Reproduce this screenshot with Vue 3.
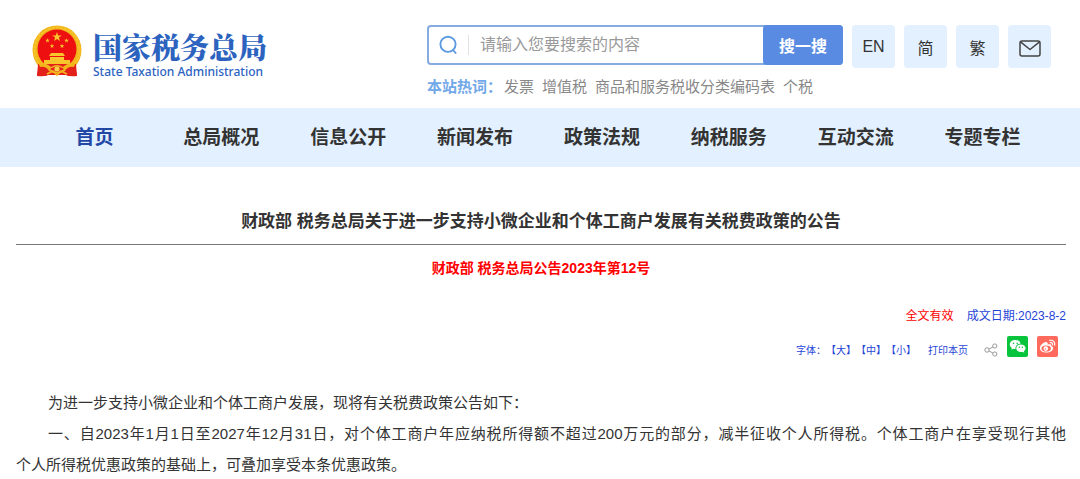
<template>
  <div class="page">
    <header class="header">
      <a class="logo" href="#">
        <svg class="emblem" viewBox="0 0 50 52" aria-hidden="true">
          <path d="M8 37 L5 50 Q11 52 16 50 L25 47 L34 50 Q39 52 45 50 L42 37 Z" fill="#d9141a" />
          <circle cx="25" cy="25" r="24.5" fill="#f2b61c" />
          <circle cx="25" cy="25" r="22.5" fill="none" stroke="#f6c42a" stroke-width="2" stroke-dasharray="3 1" />
          <circle cx="25" cy="24" r="19.5" fill="#ee1010" />
          <path :d="star(25, 12, 5)" fill="#f9c52c" />
          <path v-for="s in smallStars" :key="s[0]" :d="star(s[0], s[1], 2.4)" fill="#f9c52c" />
          <path d="M19 28 H31 L33 31 H17 Z M18 32 H32 V35 H38 V39 H12 V35 H18 Z" fill="#f9c52c" />
          <path d="M6 39 H44 L45 51 Q38 52 34 50 H16 Q12 52 5 51 Z" fill="#e3201a" />
          <path d="M6 37 Q15 38 19 42 Q25 38 31 42 Q35 38 44 37 L42 42 Q36 41 33 46 Q25 51 17 46 Q14 41 8 42 Z" fill="#f2b61c" />
          <path d="M18 44 Q25 39 32 44 Q25 50 18 44 Z" fill="#e3201a" />
          <circle cx="25" cy="44" r="2.6" fill="#f9d24a" />
          <path d="M15 49 L21 46 L25 50 L29 46 L35 49" fill="none" stroke="#f2b61c" stroke-width="1.6" />
        </svg>
        <span class="logo-text">
          <span class="logo-cn">国家税务总局</span>
          <span class="logo-en">State Taxation Administration</span>
        </span>
      </a>

      <div class="search">
        <form class="search-box" @submit.prevent>
          <label class="search-label" for="keyword" aria-label="搜索">
            <svg width="20" height="20" viewBox="0 0 20 20" fill="none" stroke="#5c9ae2" stroke-width="1.9" stroke-linecap="round">
              <circle cx="9" cy="9.3" r="7.6" />
              <path d="M14 15 L16.6 18" />
            </svg>
          </label>
          <input id="keyword" v-model="keyword" type="text" placeholder="请输入您要搜索的内容">
          <button type="submit">搜一搜</button>
        </form>
        <div class="hot">
          <strong>本站热词：</strong>
          <a v-for="w in hotWords" :key="w" href="#">{{ w }}</a>
        </div>
      </div>

      <div class="tools">
        <button v-for="l in langs" :key="l" type="button">{{ l }}</button>
        <button type="button" aria-label="邮箱">
          <svg width="22" height="17" viewBox="0 0 22 17" fill="none" stroke="#444" stroke-width="1.5" stroke-linejoin="round">
            <rect x="1" y="1" width="20" height="15" rx="2" />
            <path d="M1.5 1.8 L11 9.5 L20.5 1.8" />
          </svg>
        </button>
      </div>
    </header>

    <nav class="nav">
      <a v-for="(n, i) in navItems" :key="n" href="#" :class="{ active: i === 0 }">{{ n }}</a>
    </nav>

    <main class="article">
      <h1>财政部 税务总局关于进一步支持小微企业和个体工商户发展有关税费政策的公告</h1>
      <h2>财政部 税务总局公告2023年第12号</h2>

      <div class="status">
        <span class="valid">全文有效</span>
        <span>成文日期:2023-8-2</span>
      </div>

      <div class="actions">
        <div class="font-size">
          <span>字体：</span>
          <button v-for="s in sizes" :key="s" type="button">【{{ s }}】</button>
        </div>
        <button type="button" class="print">打印本页</button>
        <div class="share">
          <a href="#" aria-label="分享">
            <svg width="14" height="14" viewBox="0 0 14 14" fill="none" stroke="#999">
              <circle cx="3" cy="7" r="2.2" />
              <circle cx="10.8" cy="3" r="2.1" />
              <circle cx="10.8" cy="11" r="2.1" />
              <path d="M5 6 L8.9 4 M5 8 L8.9 10" />
            </svg>
          </a>
          <a href="#" aria-label="微信">
            <svg width="21" height="21" viewBox="0 0 21 21">
              <rect width="21" height="21" rx="2" fill="#07c43c" />
              <path d="M8.3 4 C5 4 2.8 6 2.8 8.5 C2.8 10 3.6 11.2 4.8 12 L4.3 13.8 L6.4 12.8 C7 13 7.8 13.1 8.5 13 C8 10 10.5 7.6 13.7 7.6 C13.2 5.4 11 4 8.3 4 Z" fill="#fff" />
              <path d="M13.8 8.4 C11.2 8.4 9.3 10 9.3 12.2 C9.3 14.4 11.3 16 13.9 16 C14.5 16 15 15.9 15.5 15.8 L17.3 16.7 L16.9 15.1 C18 14.4 18.6 13.4 18.6 12.2 C18.6 10 16.4 8.4 13.8 8.4 Z" fill="#fff" />
              <g fill="#07c43c">
                <circle cx="6.5" cy="7.2" r=".8" /><circle cx="10.2" cy="7.2" r=".8" />
                <circle cx="12.4" cy="11.2" r=".7" /><circle cx="15.4" cy="11.2" r=".7" />
              </g>
            </svg>
          </a>
          <a href="#" aria-label="微博">
            <svg width="21" height="21" viewBox="0 0 21 21">
              <rect width="21" height="21" rx="2" fill="#ff6a5c" />
              <path d="M8.8 6 C6.2 6.4 2.9 9.4 2.9 12.2 C2.9 15 6 16.6 9.4 16.6 C13.4 16.6 16.2 14.4 16.2 12.2 C16.2 10.9 15.2 10.2 14.2 9.9 C14.6 8.2 13.2 7.7 10.6 8.6 C11 7 10.5 5.9 8.8 6 Z" fill="#fff" />
              <ellipse cx="9.2" cy="12.5" rx="4.7" ry="3.1" fill="#ff6a5c" />
              <circle cx="8.8" cy="12.6" r="2.3" fill="#fff" />
              <circle cx="8.3" cy="12.9" r=".7" fill="#ff6a5c" />
              <path d="M12.8 4.4 C16 3.6 18.4 6.2 17.6 9.2 M13.2 6.6 C14.8 6.2 15.8 7.3 15.5 8.8" fill="none" stroke="#fff" stroke-width="1.2" stroke-linecap="round" />
            </svg>
          </a>
        </div>
      </div>

      <div class="content">
        <p>为进一步支持小微企业和个体工商户发展，现将有关税费政策公告如下：</p>
        <p>一、自2023年1月1日至2027年12月31日，对个体工商户年应纳税所得额不超过200万元的部分，减半征收个人所得税。个体工商户在享受现行其他<span class="keep">个人所得税优惠政策</span>的基础上，可叠加享受本条优惠政策。</p>
      </div>
    </main>
  </div>
</template>

<script setup>
import { ref } from 'vue';

const keyword = ref('');
const hotWords = ['发票', '增值税', '商品和服务税收分类编码表', '个税'];
const langs = ['EN', '简', '繁'];
const navItems = ['首页', '总局概况', '信息公开', '新闻发布', '政策法规', '纳税服务', '互动交流', '专题专栏'];
const sizes = ['大', '中', '小'];
const smallStars = [[15.5, 15.5], [34.5, 15.6], [20, 21], [30, 21.1]];

// five-pointed star around cx, cy
const star = (cx, cy, r) => {
  const points = [];
  for (let i = 0; i < 10; i++) {
    const a = (Math.PI / 5) * i - Math.PI / 2;
    const d = i % 2 ? r * 0.4 : r;
    points.push(`${(cx + d * Math.cos(a)).toFixed(2)} ${(cy + d * Math.sin(a)).toFixed(2)}`);
  }
  return `M${points.join('L')}Z`;
};
</script>

<style>
body { margin: 0; background: #fff; }
</style>

<style scoped>
.page {
  font-family: "Liberation Sans", "Noto Sans CJK SC", sans-serif;
  color: #333;
}
a { color: inherit; text-decoration: none; }
button { font-family: inherit; border: none; background: none; padding: 0; color: inherit; cursor: pointer; }
svg { display: block; }

.header {
  display: flex;
  align-items: flex-start;
  gap: 9px;
  padding: 25px 29px 9px 32px;
}
.logo { display: flex; gap: 11px; margin-right: auto; color: #2c63bf; }
.emblem { width: 50px; height: 52px; }
.logo-text { display: flex; flex-direction: column; padding-top: 4px; white-space: nowrap; }
.logo-cn { font-family: "Noto Serif CJK SC", "Noto Sans CJK SC", serif; font-size: 29px; line-height: 36px; font-weight: 900; }
.logo-en { font-family: "Noto Sans", sans-serif; font-size: 12px; line-height: 14px; font-weight: 500; }

.search { flex: 0 1 416px; min-width: 0; }
.search-box {
  display: flex;
  align-items: center;
  box-sizing: border-box;
  height: 40px;
  border: 2px solid #85abe0;
  border-radius: 4px;
}
.search-label { padding: 0 9px 0 10px; border-right: 1px solid #e2e2e2; }
.search-box input {
  flex: 1;
  min-width: 0;
  border: none;
  outline: none;
  padding: 0 11px;
  background: none;
  font-family: inherit;
  font-size: 16px;
  color: #333;
}
.search-box input::placeholder { color: #999; opacity: 1; }
.search-box button {
  width: 80px;
  height: 40px;
  margin-right: -2px;
  border-radius: 4px;
  background: #5a8be2;
  color: #fff;
  font-size: 16px;
  font-weight: 700;
}
.hot {
  display: flex;
  gap: 8px;
  padding-top: 10px;
  font-size: 15px;
  line-height: 24px;
  color: #888;
  white-space: nowrap;
}
.hot strong { margin-right: -6px; color: #71a8e8; }

.tools { display: flex; gap: 9px; }
.tools button {
  display: flex;
  align-items: center;
  justify-content: center;
  width: 43px;
  height: 43px;
  border-radius: 4px;
  background: #e2f0ff;
  font-size: 16px;
}
.tools svg { margin-top: 4px; }

.nav {
  display: grid;
  grid-template-columns: repeat(8, 1fr);
  padding: 0 34px 0 31px;
  background: #e2f0ff;
  font-size: 19px;
  font-weight: 700;
  line-height: 59px;
  text-align: center;
}
.nav .active { color: #2347a4; }

.article { padding: 42px 14px 0 16px; }
.article h1 {
  margin: 0;
  padding-bottom: 9px;
  border-bottom: 1px solid #777;
  font-size: 17px;
  line-height: 26px;
  text-align: center;
}
.article h2 {
  margin: 0;
  padding-top: 12px;
  font-size: 14px;
  line-height: 22px;
  text-align: center;
  color: #f00;
}
.status {
  display: flex;
  justify-content: flex-end;
  gap: 13px;
  padding-top: 27px;
  font-size: 12px;
  line-height: 20px;
  color: #1f44d6;
}
.valid { color: #f00; }
.actions {
  display: flex;
  justify-content: flex-end;
  align-items: center;
  padding: 8px 8px 0 0;
  font-size: 10px;
  line-height: 21px;
  color: #1f44d6;
}
.actions button { font-size: 10px; line-height: 21px; }
.font-size { display: flex; padding-top: 6px; }
.print { margin: 6px 16px 0 12px; }
.share { display: flex; align-items: center; gap: 9px; padding-bottom: 2px; }
.share a:first-child { padding-top: 6px; }

.content {
  padding-top: 26px;
  font-size: 15px;
  line-height: 31px;
  text-align: justify;
}
.content p { margin: 0; text-indent: 32px; }
.keep { white-space: nowrap; }
</style>
